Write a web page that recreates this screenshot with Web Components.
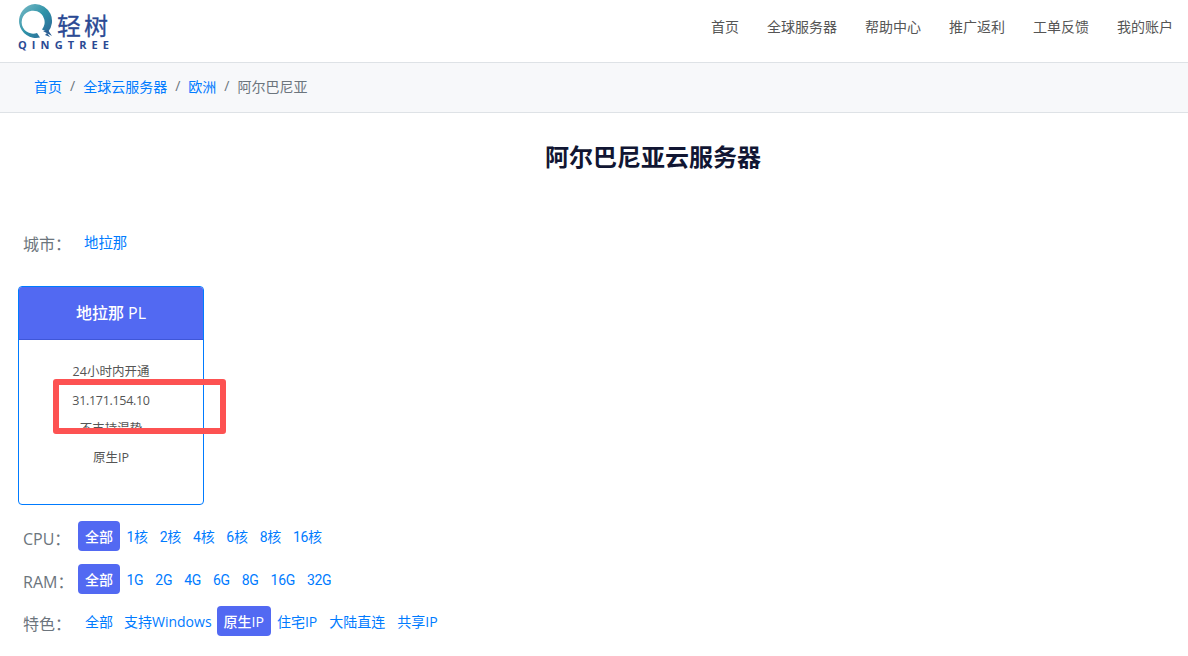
<!DOCTYPE html>
<html lang="zh">
<head>
<meta charset="utf-8">
<style>
  html, body { margin: 0; padding: 0; background: #fff; overflow: hidden; }
  body { font-family: "Liberation Sans", "Noto Sans CJK SC", sans-serif; height: 656px; position: relative; }
</style>
</head>
<body>
<site-header></site-header>
<bread-crumbs></bread-crumbs>
<page-title>阿尔巴尼亚云服务器</page-title>
<city-row></city-row>
<node-card></node-card>
<filter-row label="CPU：" items="全部*,1核,2核,4核,6核,8核,16核" top="16" latin="Roboto" track="-.3px" nudge="2"></filter-row>
<filter-row label="RAM：" items="全部*,1G,2G,4G,6G,8G,16G,32G" top="13" latin="Roboto" track="-.3px" nudge="2"></filter-row>
<filter-row label="特色：" items="全部,支持Windows,原生IP*,住宅IP,大陆直连,共享IP" top="12" latin="Open Sans" track="0" nudge="1"></filter-row>

<script>
const STACK = '"Open Sans", "Noto Sans CJK SC", sans-serif';

class site_header extends HTMLElement {
  constructor() {
    super();
    this.attachShadow({mode: 'open'}).innerHTML = `
      <style>
        :host { display: flex; justify-content: space-between; height: 62px; box-sizing: border-box; padding: 0 15px 0 18px; font-family: ${STACK}; }
        .logo { width: 96px; height: 50px; position: relative; flex: none; }
        svg { position: absolute; left: 0; top: 4px; }
        .cn { position: absolute; left: 39px; top: 13px; font: 400 24px/24px "Noto Sans CJK SC", sans-serif; letter-spacing: 3px; color: #2b4a94; white-space: nowrap; -webkit-text-stroke: .3px #2b4a94; }
        .en { position: absolute; left: 0; top: 39px; font: 700 11px/11px "Open Sans", sans-serif; letter-spacing: 5.1px; color: #2b4a94; white-space: nowrap; }
        nav { display: flex; gap: 28px; align-items: center; font-size: 14px; color: #555; height: 52px; }
      </style>
      <div class="logo">
        <svg width="36" height="35" viewBox="0 0 36 35" fill="none">
          <defs><linearGradient id="q" x1="0" y1="0" x2="1" y2="1"><stop offset="0" stop-color="#7dbcc8"/><stop offset=".5" stop-color="#2f93a8"/><stop offset="1" stop-color="#2b5f94"/></linearGradient></defs>
          <path fill-rule="evenodd" fill="url(#q)" d="M17 0a17 17 0 0 1 13 28L24 25.500A11.500 11.500 0 1 0 19 29L22 33.500A17 17 0 1 1 17 0Z"/>
          <path d="M25 27 L34 32 L30 26 Z M27 31 L32 33 L29 29 Z" fill="#2b5f94"/>
        </svg>
        <span class="cn">轻树</span>
        <span class="en">QINGTREE</span>
      </div>
      <nav><span>首页</span><span>全球服务器</span><span>帮助中心</span><span>推广返利</span><span>工单反馈</span><span>我的账户</span></nav>`;
  }
}
customElements.define('site-header', site_header);

class bread_crumbs extends HTMLElement {
  constructor() {
    super();
    this.attachShadow({mode: 'open'}).innerHTML = `
      <style>
        :host { display: flex; align-items: center; height: 51px; box-sizing: border-box; padding: 0 0 4px 34px; background: #f7f8fa; border-top: 1px solid #dee2e6; border-bottom: 1px solid #dee2e6; font-family: ${STACK}; font-size: 14px; color: #6c757d; }
        a { color: #007bff; }
        i { font-style: normal; padding: 0 8px; }
      </style>
      <a>首页</a><i>/</i><a>全球云服务器</a><i>/</i><a>欧洲</a><i>/</i><span>阿尔巴尼亚</span>`;
  }
}
customElements.define('bread-crumbs', bread_crumbs);

class page_title extends HTMLElement {
  constructor() {
    super();
    this.attachShadow({mode: 'open'}).innerHTML = `
      <style>
        :host { display: block; text-align: center; padding: 26px 0 0 118px; font: 700 24px/36px ${STACK}; color: #111633; height: 74px; }
      </style>
      <slot></slot>`;
  }
}
customElements.define('page-title', page_title);

class city_row extends HTMLElement {
  constructor() {
    super();
    this.attachShadow({mode: 'open'}).innerHTML = `
      <style>
        :host { display: flex; align-items: center; gap: 22px; padding: 16px 0 1px 23px; font-family: ${STACK}; font-size: 14.4px; height: 24px; }
        b { font-weight: 400; font-size: 16px; color: #6c757d; width: 39px; flex: none; white-space: nowrap; padding-top: 4px; }
        a { color: #007bff; }
      </style>
      <b>城市：</b><a>地拉那</a>`;
  }
}
customElements.define('city-row', city_row);

class node_card extends HTMLElement {
  constructor() {
    super();
    this.attachShadow({mode: 'open'}).innerHTML = `
      <style>
        :host { display: block; position: relative; width: 186px; height: 219px; box-sizing: border-box; margin: 32px 0 0 18px; border: 1px solid #007bff; border-radius: 4px; font-family: ${STACK}; font-size: 12.5px; color: #555; }
        .head { height: 53px; box-sizing: border-box; padding-bottom: 2px; background: #5269f2; border-bottom: 1px solid #3f56d8; border-radius: 3px 3px 0 0; color: #fff; font-size: 16px; font-weight: 500; display: flex; align-items: center; justify-content: center; }
        .rows { height: 164px; text-align: center; padding-top: 18px; overflow: hidden; box-sizing: border-box; }
        .rows div { height: 28.7px; line-height: 28px; }
        .rows .ip { letter-spacing: -.3px; line-height: 27px; }
        .mark { position: absolute; left: 34px; top: 92px; width: 173px; height: 55px; box-sizing: border-box; border: 6px solid #fd5252; border-radius: 3px; }
      </style>
      <div class="head">地拉那 PL</div>
      <div class="rows"><div>24小时内开通</div><div class="ip">31.171.154.10</div><div>不支持混势</div><div>原生IP</div></div>
      <div class="mark"></div>`;
  }
}
customElements.define('node-card', node_card);

class filter_row extends HTMLElement {
  constructor() {
    super();
    const items = this.getAttribute('items').split(',').map(t => {
      const on = t.endsWith('*');
      return `<a class="${on ? 'on' : ''}">${on ? t.slice(0, -1) : t}</a>`;
    }).join('');
    const latin = this.getAttribute('latin');
    const nudge = +this.getAttribute('nudge');
    this.attachShadow({mode: 'open'}).innerHTML = `
      <style>
        :host { display: flex; align-items: center; height: 30px; padding-left: 23px; font-family: ${STACK}; }
        b { font-weight: 400; font-size: 16px; color: #6c757d; width: 55px; flex: none; white-space: nowrap; padding-top: 3px; }
        div { display: flex; align-items: center; font-size: 14px; font-family: "${latin}", "Noto Sans CJK SC", sans-serif; }
        a { color: #007bff; padding: ${nudge}px 6px 0; line-height: ${30 - nudge}px; border-radius: 4px; letter-spacing: ${this.getAttribute('track')}; }
        a.on { background: #5269f2; color: #fff; padding: ${nudge}px 7px 0; font-weight: 500; letter-spacing: 0; }
        a:first-child { padding: ${nudge}px 7px 0; }
        a.on:first-child { margin-right: .5px; }
        a:first-child:not(.on) { padding-right: 5px; }
        a.on:not(:first-child) { margin-left: -1px; }
      </style>
      <b>${this.getAttribute('label')}</b><div>${items}</div>`;
    this.style.marginTop = this.getAttribute('top') + 'px';
  }
}
customElements.define('filter-row', filter_row);
</script>
</body>
</html>
